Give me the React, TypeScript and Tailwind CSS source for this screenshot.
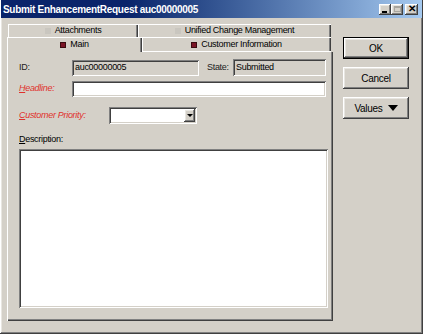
import React from "react";

const font = "font-['Liberation_Sans',Arial,sans-serif]";
const raised =
  "shadow-[inset_-1px_-1px_#404040,inset_1px_1px_#ffffff,inset_-2px_-2px_#808080,inset_2px_2px_#e8e6e1]";
const sunken =
  "shadow-[inset_1px_1px_#808080,inset_-1px_-1px_#ffffff,inset_2px_2px_#404040,inset_-2px_-2px_#d4d0c8]";

const Mark = ({ on }: { on: boolean }) => (
  <span
    className={
      on
        ? "w-[6px] h-[6px] bg-[#7a1426] border border-[#3a0a10] mr-[4px]"
        : "w-[6px] h-[6px] bg-[#c9c6bf] mr-[4px]"
    }
  />
);

const Label = ({ first, rest, w, red }: { first: string; rest: string; w: string; red?: boolean }) => (
  <div className={`${w} shrink-0 ${red ? "text-[#e0302c] italic" : "text-black"}`}>
    <span className="underline">{first}</span>
    {rest}
  </div>
);

const App = () => {
  return (
    <div
      className={`w-[423px] h-[334px] bg-[#d4d0c8] flex flex-col text-[9px] tracking-[-0.3px] ${font} ${raised}`}
    >
      {/* title bar */}
      <div className="h-[18px] mx-[1px] mt-[0px] flex items-center justify-between bg-linear-to-r from-[#0a246a] from-[30%] to-[#a6caf0] pl-[2px] pr-[4px]">
        <span className="text-white font-bold text-[10px]">Submit EnhancementRequest auc00000005</span>
        <div className="flex items-center">
          <div className={`w-[12px] h-[11px] bg-[#d4d0c8] ${raised} flex items-end justify-start pl-[3px] pb-[2px]`}>
            <span className="w-[5px] h-[2px] bg-black" />
          </div>
          <div className={`w-[12px] h-[11px] bg-[#d4d0c8] ${raised} flex items-center justify-center`}>
            <span className="w-[7px] h-[6px] border border-[#a8a59e] border-t-2" />
          </div>
          <div
            className={`w-[13px] h-[11px] ml-[2px] bg-[#d4d0c8] ${raised} flex items-center justify-center text-[10px] font-bold leading-none text-black`}
          >
            ✕
          </div>
        </div>
      </div>

      <div className="flex pl-[7px] pt-[6px]">
        {/* left: tabs + panel */}
        <div className="w-[326px] flex flex-col">
          <div className="flex h-[13px] w-[324px] pl-[1px]">
            <div className="w-[130px] flex items-center justify-center shadow-[inset_1px_1px_#ffffff,inset_-1px_0_#404040,inset_-2px_0_#808080] text-black">
              <Mark on={false} />
              Attachments
            </div>
            <div className="flex-1 flex items-center justify-center shadow-[inset_1px_1px_#ffffff,inset_-1px_0_#404040,inset_-2px_0_#808080] text-black">
              <Mark on={false} />
              Unified Change Management
            </div>
          </div>
          <div className="flex h-[15px] w-[324px]">
            <div className="w-[135px] flex items-center justify-center shadow-[inset_1px_1px_#ffffff,inset_-1px_0_#404040,inset_-2px_0_#808080] text-black">
              <Mark on />
              Main
            </div>
            <div className="flex-1 flex items-center justify-center shadow-[inset_0_-1px_#ffffff,inset_1px_1px_#ffffff,inset_-1px_0_#404040,inset_-2px_0_#808080] text-black">
              <Mark on />
              Customer Information
            </div>
          </div>

          {/* panel */}
          <div className="h-[269px] flex flex-col pl-[12px] pt-[8px] shadow-[inset_1px_0_#ffffff,inset_-1px_-1px_#404040,inset_-2px_-2px_#808080]">
            <div className="flex items-center h-[16px]">
              <div className="w-[53px] shrink-0 text-[#222]">ID:</div>
              <div className={`w-[127px] h-[16px] flex items-center pl-[3px] bg-[#d4d0c8] text-black ${sunken}`}>
                auc00000005
              </div>
              <div className="ml-[8px] w-[26px] text-[#222]">State:</div>
              <div className={`w-[93px] h-[17px] -mt-[1px] flex items-center pl-[3px] bg-[#d4d0c8] text-black ${sunken}`}>
                Submitted
              </div>
            </div>

            <div className="flex items-center h-[16px] mt-[5px]">
              <Label first="H" rest="eadline:" w="w-[53px]" red />
              <div className={`w-[254px] h-[16px] bg-white ${sunken}`} />
            </div>

            <div className="flex items-center h-[17px] mt-[10px]">
              <Label first="C" rest="ustomer Priority:" w="w-[90px]" red />
              <div className={`w-[88px] h-[17px] bg-white flex justify-end p-[2px] ${sunken}`}>
                <div className={`w-[11px] h-[13px] bg-[#d4d0c8] ${raised} flex items-center justify-center`}>
                  <span className="w-0 h-0 border-l-[3px] border-r-[3px] border-t-[3px] border-l-transparent border-r-transparent border-t-black" />
                </div>
              </div>
            </div>

            <div className="mt-[10px] h-[12px] flex items-center">
              <Label first="D" rest="escription:" w="w-[90px]" />
            </div>
            <div className={`mt-[3px] w-[309px] h-[159px] bg-white ${sunken}`} />
          </div>
        </div>

        {/* right: buttons */}
        <div className="ml-[10px] pt-[13px] flex flex-col gap-[8px] text-[10px] text-black">
          <div className="w-[66px] h-[22px] border border-black bg-[#d4d0c8]">
            <div className={`w-full h-full flex items-center justify-center ${raised}`}>OK</div>
          </div>
          <div className={`w-[66px] h-[22px] bg-[#d4d0c8] flex items-center justify-center ${raised}`}>Cancel</div>
          <div className={`w-[66px] h-[22px] bg-[#d4d0c8] flex items-center justify-center gap-[5px] ${raised}`}>
            Values
            <span className="w-0 h-0 border-l-[5px] border-r-[5px] border-t-[6px] border-l-transparent border-r-transparent border-t-black" />
          </div>
        </div>
      </div>
    </div>
  );
};

export default App;
